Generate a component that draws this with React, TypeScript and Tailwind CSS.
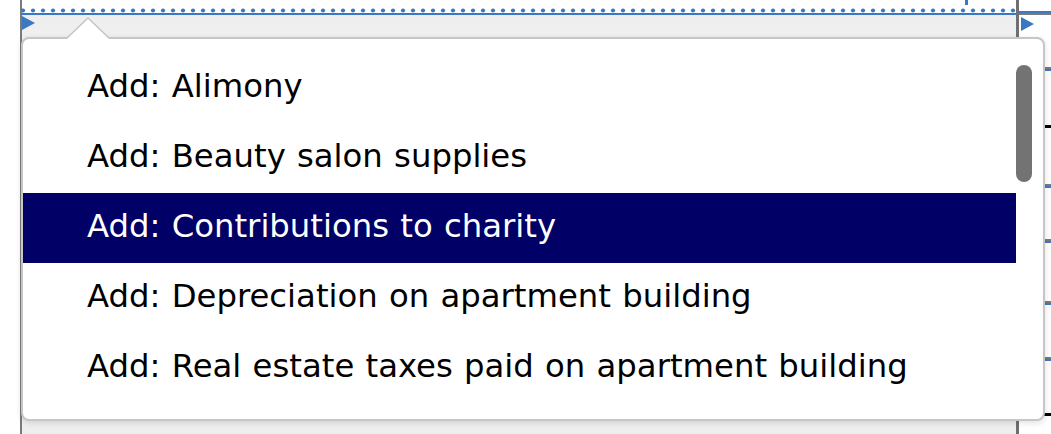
import React from "react";

const items = [
  "Add: Alimony",
  "Add: Beauty salon supplies",
  "Add: Contributions to charity",
  "Add: Depreciation on apartment building",
  "Add: Real estate taxes paid on apartment building",
];

function Dots() {
  return (
    <svg width="996" height="5" className="block">
      {Array.from({ length: 100 }).map((_, i) => (
        <circle key={i} cx={1 + i * 10} cy={2.5} r={2.1} fill="#3b78c3" />
      ))}
    </svg>
  );
}

function Tri() {
  return (
    <svg width="13" height="14" viewBox="0 0 13 14" className="block">
      <polygon points="0,0 13,7 0,14" fill="#3a78c4" />
    </svg>
  );
}

export default function App() {
  const selected = 2;
  return (
    <div
      className="relative w-[1051px] h-[434px] overflow-hidden bg-white"
      style={{ fontFamily: '"DejaVu Sans", Verdana, sans-serif' }}
    >
      {/* underlying page */}
      <div className="flex h-full">
        <div className="w-[20px] shrink-0 bg-white" />
        <div className="w-[996px] shrink-0 border-l-2 border-[#7a7a7a] flex flex-col">
          <div className="h-[8px]" />
          <Dots />
          <div className="h-[2px] bg-[#3b78c3]" />
          <div className="flex-1 bg-gradient-to-b from-[#eeeeee] via-white to-[#eeeeee] relative">
            <div className="pt-[1px]">
              <Tri />
            </div>
            <div className="absolute left-[50px] top-[409px] text-[30px] text-[#222] whitespace-nowrap">
              for the apartment building
            </div>
          </div>
        </div>
        <div className="flex-1 border-l-[3px] border-[#6f6f6f] flex flex-col">
          <div className="h-[11px]" />
          <div className="h-[2px] bg-[#3b78c3]" />
          <div className="h-[2px] bg-[#7a7a7a]" />
          <div className="pl-[2px] pt-[2px]">
            <Tri />
          </div>
          <div className="h-[36px]" />
          <div className="h-[2px] bg-[#7a7a7a]" />
          <div className="h-[2px] bg-[#3b78c3]" />
          <div className="h-[54px]" />
          <div className="h-[3px] bg-black" />
          <div className="h-[56px]" />
          <div className="h-[2px] bg-[#7a7a7a]" />
          <div className="h-[2px] bg-[#3b78c3]" />
          <div className="h-[51px]" />
          <div className="h-[2px] bg-[#7a7a7a]" />
          <div className="h-[2px] bg-[#3b78c3]" />
          <div className="h-[58px]" />
          <div className="h-[2px] bg-[#7a7a7a]" />
          <div className="h-[2px] bg-[#3b78c3]" />
          <div className="h-[52px]" />
          <div className="h-[2px] bg-[#7a7a7a]" />
          <div className="h-[2px] bg-[#3b78c3]" />
          <div className="h-[52px]" />
          <div className="h-[3px] bg-black" />
        </div>
      </div>
      <div className="absolute left-[965px] top-0 w-[3px] h-[5px] bg-[#3b78c3]" />

      {/* dropdown popup */}
      <div className="absolute left-[21px] top-[37px] w-[1024px] h-[384px] rounded-[8px] border-2 border-[#c6c6c6] bg-white shadow-[0_2px_6px_rgba(0,0,0,0.12)] flex">
        <div className="flex-1 flex flex-col pt-[14px]">
          {items.map((t, i) => (
            <div
              key={t}
              className={
                "h-[70px] flex items-center pl-[64px] pb-[3px] text-[32.3px] [word-spacing:1px] whitespace-nowrap " +
                (i === selected ? "bg-[#000066] text-white" : "text-black")
              }
            >
              {t}
            </div>
          ))}
        </div>
        <div className="w-[27px] shrink-0 flex justify-start pt-[26px]">
          <div className="w-[16px] h-[117px] rounded-full bg-[#737373]" />
        </div>
      </div>
      {/* notch */}
      <svg
        className="absolute left-[66px] top-[17px]"
        width="44"
        height="23"
        viewBox="0 0 44 23"
      >
        <polygon points="1,22 22,1 43,22" fill="white" />
        <polyline points="1,21 22,1 43,21" fill="none" stroke="#c6c6c6" strokeWidth="1.5" />
      </svg>
    </div>
  );
}
